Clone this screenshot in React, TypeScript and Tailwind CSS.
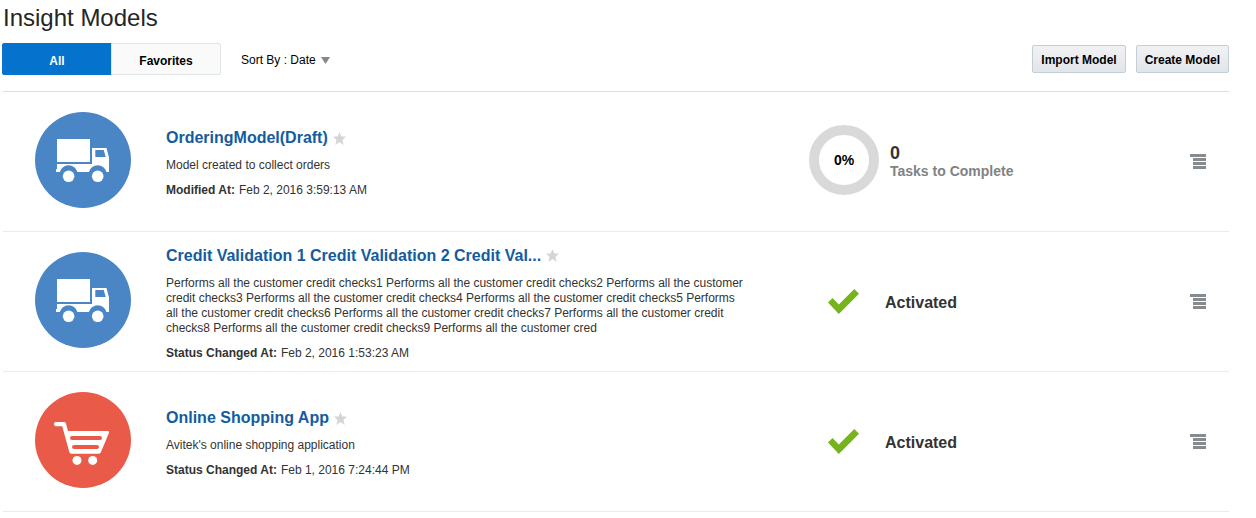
import { useState, type ReactNode } from "react";

type Model = {
  name: string;
  description: string;
  dateLabel: string;
  date: string;
  icon: "truck" | "cart";
  progress?: number;
  tasks?: number;
};

const models: Model[] = [
  {
    name: "OrderingModel(Draft)",
    description: "Model created to collect orders",
    dateLabel: "Modified At:",
    date: "Feb 2, 2016 3:59:13 AM",
    icon: "truck",
    progress: 0,
    tasks: 0,
  },
  {
    name: "Credit Validation 1 Credit Validation 2 Credit Val...",
    description:
      "Performs all the customer credit checks1 Performs all the customer credit checks2 Performs all the customer credit checks3 Performs all the customer credit checks4 Performs all the customer credit checks5 Performs all the customer credit checks6 Performs all the customer credit checks7 Performs all the customer credit checks8 Performs all the customer credit checks9 Performs all the customer cred",
    dateLabel: "Status Changed At:",
    date: "Feb 2, 2016 1:53:23 AM",
    icon: "truck",
  },
  {
    name: "Online Shopping App",
    description: "Avitek's online shopping application",
    dateLabel: "Status Changed At:",
    date: "Feb 1, 2016 7:24:44 PM",
    icon: "cart",
  },
];

function TruckIcon() {
  return (
    <svg viewBox="0 0 96 96" className="size-24" aria-hidden="true">
      <circle cx="48" cy="48" r="48" fill="#4a86c6" />
      <path fill="#fff" d="M22 27h33v23H22z" />
      <path
        fill="#fff"
        fillRule="evenodd"
        d="M22 52h35V36h14.500L74 45.500V60H71.500a9 8.500 0 0 0-17.600 0H42.400a9 8.500 0 0 0-17.600 0H21V57h1zM60.300 38v7h10.400l-2-7z"
      />
      <circle cx="33.600" cy="64.300" r="5.800" fill="#fff" />
      <circle cx="62.700" cy="64.300" r="5.800" fill="#fff" />
    </svg>
  );
}

function CartIcon() {
  return (
    <svg viewBox="0 0 96 96" className="size-24" aria-hidden="true">
      <circle cx="48" cy="48" r="48" fill="#e95b48" />
      <path
        fill="#fff"
        fillRule="evenodd"
        d="M21 30h8.200q1.300 0 1.700 1.300L33 39h39.500q2.200 0 1.300 2.200L66 60q-.7 1.700-2.200 1.700H36.500q-1.700 0-2.200-1.700L27.200 34.200H21a2.100 2.100 0 0 1 0-4.200zM37 44a2 2 0 0 0 0 4h28a2 2 0 0 0 0-4zM39 53a2 2 0 0 0 0 4h23a2 2 0 0 0 0-4z"
      />
      <circle cx="42" cy="68.400" r="4.500" fill="#fff" />
      <circle cx="57.700" cy="68.400" r="4.500" fill="#fff" />
    </svg>
  );
}

function StarIcon({ filled }: { filled: boolean }) {
  return (
    <svg viewBox="0 0 12 12" className="size-[13px]" fill={filled ? "#f5b400" : "#d3d5d7"} aria-hidden="true">
      <path d="M6 0l1.700 4.200H12L8.700 7.300 9.900 12 6 9.300 2.100 12l1.200-4.700L0 4.200h4.300z" />
    </svg>
  );
}

function ToolbarButton({ children }: { children: ReactNode }) {
  return (
    <button
      type="button"
      className="h-7 rounded-xs border border-[#c4ced7] bg-linear-to-b from-[#f0f2f4] to-[#e2e5e9] px-2 pt-0.5 text-xs font-bold text-black"
    >
      {children}
    </button>
  );
}

function ProgressStatus({ percent, tasks }: { percent: number; tasks: number }) {
  return (
    <div className="-mt-1 flex items-center gap-[11px]">
      <div className="grid size-[70px] place-items-center">
        <svg viewBox="0 0 70 70" className="col-start-1 row-start-1 size-full" aria-hidden="true">
          <circle cx="35" cy="35" r="30" fill="none" stroke="#d9d9d9" strokeWidth="10" />
        </svg>
        <span className="col-start-1 row-start-1 text-sm font-bold text-black">{percent}%</span>
      </div>
      <div className="pt-1 font-bold">
        <div className="text-lg leading-[18px] text-[#333]">{tasks}</div>
        <div className="text-sm leading-[18px] text-[#828282]">Tasks to Complete</div>
      </div>
    </div>
  );
}

function ActivatedStatus() {
  return (
    <div className="flex items-center gap-[26px] pl-[19px]">
      <svg viewBox="0 0 31 25" className="h-[25px] w-[31px]" aria-hidden="true">
        <path fill="#76b31c" d="M0 13.500L4.500 9l6.300 6.500L26.300 0 31 4.700 10.800 25z" />
      </svg>
      <span className="pt-0.5 text-base leading-5 font-bold text-[#333]">Activated</span>
    </div>
  );
}

function ModelRow({ model }: { model: Model }) {
  const [favorite, setFavorite] = useState(false);
  return (
    <li className="grid min-h-[140px] grid-cols-[163px_643fr_381fr_39px] items-center border-b border-[#ebebeb]">
      <div className="self-start pt-5 pl-8">{model.icon === "truck" ? <TruckIcon /> : <CartIcon />}</div>
      <div className="pt-[3px] pr-10 text-xs leading-[15px] text-[#333]">
        <div className="flex items-center gap-[5px]">
          <h2 className="text-base leading-5 font-bold">
            <a href="#" className="text-[#145c9e]">
              {model.name}
            </a>
          </h2>
          <button
            type="button"
            aria-label="Favorite"
            aria-pressed={favorite}
            onClick={() => setFavorite(!favorite)}
          >
            <StarIcon filled={favorite} />
          </button>
        </div>
        <p className="mt-[10px] max-w-[580px]">{model.description}</p>
        <p className="mt-[10px] flex gap-1">
          <strong>{model.dateLabel}</strong>
          <span>{model.date}</span>
        </p>
      </div>
      {model.progress !== undefined ? (
        <ProgressStatus percent={model.progress} tasks={model.tasks ?? 0} />
      ) : (
        <ActivatedStatus />
      )}
      <button type="button" aria-label="Model actions" className="justify-self-start">
        <svg viewBox="0 0 16 15" className="h-[15px] w-4" fill="#868b90" aria-hidden="true">
          <path d="M0 0h16v3H0zM3 4h13v3H3zM3 8h13v3H3zM3 12h13v3H3z" />
        </svg>
      </button>
    </li>
  );
}

export default function App() {
  const [tab, setTab] = useState("All");
  const tabs = ["All", "Favorites"];
  return (
    <main className="bg-white pr-[27px] pl-[3px] font-['Liberation_Sans',Arial,sans-serif] text-black">
      <h1 className="text-2xl leading-9 text-[#252525]">Insight Models</h1>
      <div className="mt-[7px] flex items-center justify-between border-b border-[#d6dfe6] pb-4">
        <div className="flex items-center">
          <div className="-ml-px flex -space-x-px">
            {tabs.map((t) => (
              <button
                key={t}
                type="button"
                aria-pressed={tab === t}
                onClick={() => setTab(t)}
                className={
                  "h-8 w-[110px] border pt-1 text-xs font-bold first:rounded-l-xs last:rounded-r-xs " +
                  (tab === t
                    ? "border-[#0572ce] bg-[#0572ce] text-white"
                    : "border-[#dfe4e7] bg-[#fafafa] text-black")
                }
              >
                {t}
              </button>
            ))}
          </div>
          <div className="ml-5 flex items-center pt-0.5 text-xs">
            <label htmlFor="sort">Sort By :&nbsp;</label>
            <select id="sort" className="field-sizing-content appearance-none bg-transparent">
              <option>Date</option>
              <option>Name</option>
            </select>
            <svg viewBox="0 0 9 7" className="ml-[5px] h-[7px] w-[9px]" fill="#82898e" aria-hidden="true">
              <path d="M0 0h9L4.500 7z" />
            </svg>
          </div>
        </div>
        <div className="flex gap-[10px]">
          <ToolbarButton>Import Model</ToolbarButton>
          <ToolbarButton>Create Model</ToolbarButton>
        </div>
      </div>
      <ul>
        {models.map((m) => (
          <ModelRow key={m.name} model={m} />
        ))}
      </ul>
    </main>
  );
}
